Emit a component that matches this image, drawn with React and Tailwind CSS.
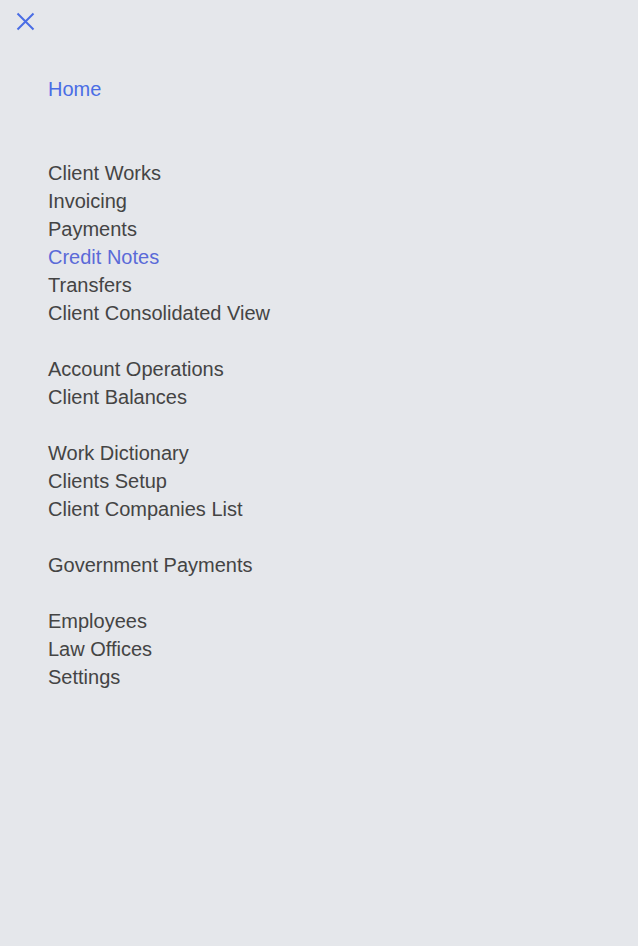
import React from "react";

const groups = [
  ["Client Works", "Invoicing", "Payments", "Credit Notes", "Transfers", "Client Consolidated View"],
  ["Account Operations", "Client Balances"],
  ["Work Dictionary", "Clients Setup", "Client Companies List"],
  ["Government Payments"],
  ["Employees", "Law Offices", "Settings"],
];

const App = () => {
  return (
    <div
      className="min-h-screen bg-[#e5e7eb] text-[#444444]"
      style={{ fontFamily: '"Liberation Sans", Arial, sans-serif' }}
    >
      <div className="pl-4 pt-3 h-[75px]">
        <button className="block text-[#4a6de5]">
          <svg width="19" height="19" viewBox="0 0 19 19" fill="none" stroke="currentColor" strokeWidth="2">
            <path d="M1.5 1.5 L17.5 17.5 M17.5 1.5 L1.5 17.5" />
          </svg>
        </button>
      </div>
      <nav className="pl-12 text-xl leading-7">
        <a className="block text-[#4a6de5]">Home</a>
        <div className="h-14" />
        <div className="flex flex-col gap-7">
          {groups.map((g, i) => (
            <ul key={i}>
              {g.map((item) => (
                <li key={item} className={item === "Credit Notes" ? "text-[#5a6ad8]" : ""}>
                  {item}
                </li>
              ))}
            </ul>
          ))}
        </div>
      </nav>
    </div>
  );
};

export default App;
